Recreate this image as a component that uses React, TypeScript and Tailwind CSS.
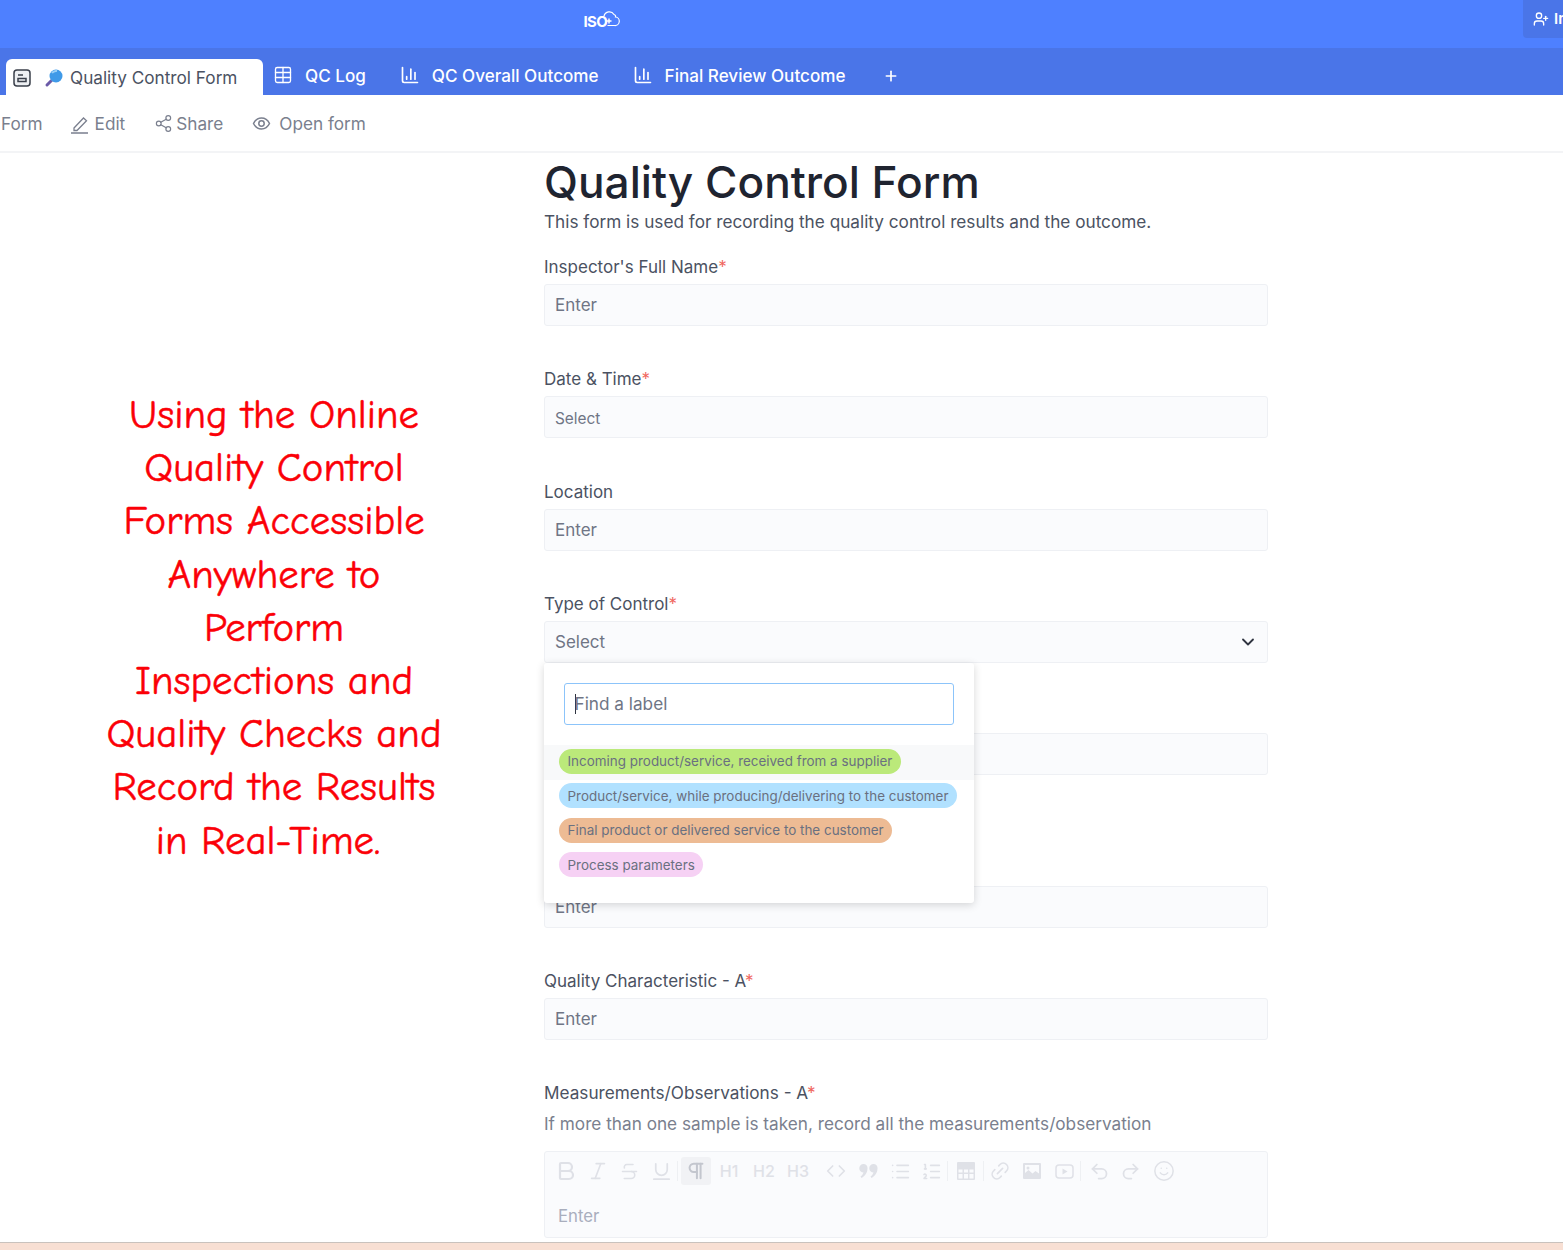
import React from 'react';
import {
  BarChart3, Bold, ChevronDown, Code, Italic, Link2, List, ListOrdered,
  Pilcrow, Plus, Redo2, Share2, Smile, Strikethrough, Table, Underline, Undo2, UserPlus,
} from 'lucide-react';

const headline = [
  'Using the Online',
  'Quality Control',
  'Forms Accessible',
  'Anywhere to',
  'Perform',
  'Inspections and',
  'Quality Checks and',
  'Record the Results',
  'in Real-Time.',
];

const Sep = () => <span className="h-[20px] w-px shrink-0 bg-[#eef0f3]" />;

const Cell = ({ w = 'w-[32px]', children }: { w?: string; children: React.ReactNode }) => (
  <span className={`flex h-[28px] shrink-0 items-center justify-center ${w}`}>{children}</span>
);

const Field = ({ label, required, placeholder, gap, small }: { label?: string; required?: boolean; placeholder: string; gap: string; small?: boolean }) => (
  <div className={gap}>
    {label ? (
      <div className="h-[18px] text-[17px] leading-[18px] text-[#4b5262]">
        {label}
        {required && <span className="text-[#f0685f]">*</span>}
      </div>
    ) : (
      <div className="h-[18px]" />
    )}
    <div className={`mt-[8px] flex h-[42px] items-center rounded-[3px] border border-[#eef0f4] bg-[#fafbfd] px-[10px] pt-[2px] text-[#6f7585] ${small ? 'text-[15.4px]' : 'text-[17px]'}`}>
      {placeholder}
    </div>
  </div>
);

const Pill = ({ text, color, hover }: { text: string; color: string; hover?: boolean }) => (
  <div className={`flex h-[34.5px] items-center px-[15px] ${hover ? 'bg-[#f8f9fa]' : ''}`}>
    <span className={`-mt-[2px] flex h-[25px] items-center whitespace-nowrap rounded-full px-[8.5px] text-[13.45px] text-[#6a7080] ${color}`}>{text}</span>
  </div>
);

const TabLabel = ({ icon, text }: { icon: React.ReactNode; text: string }) => (
  <div className="flex items-center gap-[12px] text-[17.1px] font-medium text-white">
    {icon}
    <span>{text}</span>
  </div>
);

export default function App() {
  return (
    <div className="relative h-[1250px] w-[1563px] overflow-hidden bg-white font-['Inter',sans-serif]">
      {/* top bar */}
      <div className="relative flex h-[48px] items-center justify-center bg-[#4e80ff] pb-[6px] pr-[360px]">
        <div className="relative flex h-[20px] w-[36px] items-end text-white">
          <span className="text-[15px] font-bold leading-[18px] tracking-[-0.6px]">ISO</span>
          <svg width="24" height="20" viewBox="0 0 24 20" fill="none" stroke="currentColor" strokeWidth="1.2" className="absolute right-0 top-[-1px]">
            <path d="M8 6a5.5 5.5 0 0 1 10-1.5 2 2 0 0 1 1.5 2.5 4.2 4.2 0 0 1 -1 8.500h-7" />
            <path d="M13 8.500v5M10.500 11h5" strokeWidth="1.500" />
          </svg>
        </div>
        <div className="absolute right-0 top-0 flex h-[38px] w-[40px] items-center gap-[5px] overflow-hidden rounded-bl-[4px] bg-[#4a75e8] pl-[10px] text-[15px] font-semibold text-white">
          <UserPlus className="h-[16px] w-[16px] shrink-0" />
          <span>Invite</span>
        </div>
      </div>

      {/* tabs */}
      <div className="flex h-[47px] items-end bg-[#4a75e8] pl-[6px]">
        <div className="flex h-[36px] w-[257px] items-center rounded-t-[6px] bg-white pl-[7px] pt-[1px]">
          <svg width="18" height="18" viewBox="0 0 18 18" fill="#eef0f3" stroke="#3a3f4a" strokeWidth="1.5">
            <rect x="1" y="1" width="16" height="16" rx="3" />
            <path d="M5 6h5M5 9.500h8v3H5z" fill="none" />
          </svg>
          <svg width="20" height="20" viewBox="0 0 20 20" className="ml-[13px]">
            <path d="M7.500 12.500l-4.500 4.500" stroke="#6b5aa8" strokeWidth="3" strokeLinecap="round" />
            <circle cx="12" cy="8" r="6.500" fill="#3f9ae8" />
            <path d="M8 5a5 5 0 0 1 5-2" stroke="#9ad0f7" strokeWidth="2" fill="none" />
          </svg>
          <span className="ml-[6px] text-[17.2px] text-[#4b5262]">Quality Control Form</span>
        </div>
        <div className="flex h-[47px] items-center pl-[10px] pt-[8px]">
          <TabLabel icon={<Table className="h-[20px] w-[20px]" strokeWidth={1.6} />} text="QC Log" />
          <div className="ml-[34px]">
            <TabLabel icon={<BarChart3 className="h-[20px] w-[20px]" />} text="QC Overall Outcome" />
          </div>
          <div className="ml-[34px]">
            <TabLabel icon={<BarChart3 className="h-[20px] w-[20px]" />} text="Final Review Outcome" />
          </div>
          <Plus className="ml-[38px] h-[16px] w-[16px] text-white" strokeWidth={2.5} />
        </div>
      </div>

      {/* form toolbar */}
      <div className="flex h-[58px] items-center border-b-2 border-[#f3f4f6] pl-[1px] pt-[2px] text-[17.2px] text-[#7a7f8e]">
        <span>Form</span>
        <span className="ml-[27px] flex items-center gap-[5px]">
          <svg width="20" height="20" viewBox="0 0 20 20" fill="none" stroke="currentColor" strokeWidth="1.300">
            <path d="M4 14l9.500-10 3 2.800L7 16.500H4zM1 19h17" />
          </svg>
          Edit
        </span>
        <span className="ml-[29px] flex items-center gap-[3px]">
          <Share2 className="h-[19px] w-[19px]" strokeWidth={1.5} />
          Share
        </span>
        <span className="ml-[29px] flex items-center gap-[8px]">
          <svg width="19" height="19" viewBox="0 0 19 19" fill="none" stroke="currentColor" strokeWidth="1.500">
            <path d="M1.500 9.500c2-4 5-5.500 8-5.500s6 1.500 8 5.500c-2 4-5 5.500-8 5.500s-6-1.500-8-5.500z" />
            <circle cx="9.500" cy="9.500" r="2.700" />
          </svg>
          Open form
        </span>
      </div>

      <div className="flex">
        {/* left headline */}
        <div className="w-[544px] shrink-0 pt-[235px]">
          <div className="w-[548px] text-center font-['Comic_Sans_MS','Comic_Neue',cursive] text-[40.800px] leading-[53.200px] text-[#fb0007] [-webkit-text-stroke:0.5px_#fb0007]">
            {headline.map((line, i) => (
              <div key={line} className={i === 8 ? 'pr-[12px]' : ''}>{line}</div>
            ))}
          </div>
        </div>

        {/* form */}
        <div className="relative w-[724px]">
          <h1 className="pt-[5px] text-[44.200px] font-medium leading-[48px] text-[#1f2430]">Quality Control Form</h1>
          <p className="mt-[4px] text-[17.200px] leading-[24px] text-[#4b5262]">This form is used for recording the quality control results and the outcome.</p>

          <Field label="Inspector's Full Name" required placeholder="Enter" gap="mt-[24px]" />
          <Field label="Date & Time" required placeholder="Select" gap="mt-[44.300px]" small />
          <Field label="Location" placeholder="Enter" gap="mt-[44.300px]" />

          <div className="mt-[44.300px]">
            <div className="h-[18px] text-[17px] leading-[18px] text-[#4b5262]">
              Type of Control<span className="text-[#f0685f]">*</span>
            </div>
            <div className="mt-[8px] flex h-[42px] items-center justify-between rounded-[3px] border border-[#eef0f4] bg-[#fafbfd] pl-[10px] pr-[9px] pt-[1px] text-[17px] text-[#6f7585]">
              Select
              <ChevronDown className="h-[20px] w-[20px] text-[#2f3440]" strokeWidth={2.2} />
            </div>
          </div>

          <Field placeholder="" gap="mt-[44.300px]" />
          <Field placeholder="Enter" gap="mt-[84.500px]" />
          <Field label="Quality Characteristic - A" required placeholder="Enter" gap="mt-[44.300px]" />

          <div className="mt-[44.300px]">
            <div className="h-[18px] text-[17.200px] leading-[18px] text-[#4b5262]">
              Measurements/Observations - A<span className="text-[#f0685f]">*</span>
            </div>
            <p className="mt-[12px] text-[17.200px] leading-[20px] text-[#7a7f8e]">If more than one sample is taken, record all the measurements/observation</p>
            <div className="mt-[17px] h-[87px] rounded-[3px] border border-[#eef0f4] bg-[#fafbfd] pl-[5px] pt-[5px] text-[#dfe1e7]">
              <div className="flex h-[28px] items-center">
                <Cell><Bold className="h-[24px] w-[24px]" strokeWidth={2.2} /></Cell>
                <Cell><Italic className="h-[22px] w-[22px]" strokeWidth={1.8} /></Cell>
                <Cell w="w-[31px]"><Strikethrough className="h-[21px] w-[21px]" strokeWidth={1.8} /></Cell>
                <Cell><Underline className="h-[23px] w-[23px]" strokeWidth={1.8} /></Cell>
                <Sep />
                <span className="ml-[3px] flex h-[28px] w-[30px] shrink-0 items-center justify-center rounded-[3px] bg-[#f1f2f5] text-[#c3c6ce]">
                  <Pilcrow className="h-[22px] w-[22px]" strokeWidth={2.2} />
                </span>
                <Cell w="w-[34px] ml-[1px]"><span className="text-[16px] font-medium">H1</span></Cell>
                <Cell w="w-[34px] ml-[1px]"><span className="text-[16px] font-medium">H2</span></Cell>
                <Cell w="w-[34px]"><span className="text-[16px] font-medium">H3</span></Cell>
                <span className="ml-[3px]"><Sep /></span>
                <Cell w="w-[35px]"><Code className="h-[20px] w-[20px]" strokeWidth={2} /></Cell>
                <Cell>
                  <svg width="20" height="14" viewBox="0 0 20 14" fill="currentColor">
                    <path d="M4.500 0a4 4 0 0 1 4 4.500c0 4-2.500 7.500-6 9.500l-1-1.500c1.500-1 2.500-2.500 3-4a4 4 0 0 1 0-8.500z" />
                    <path d="M14.500 0a4 4 0 0 1 4 4.500c0 4-2.500 7.500-6 9.500l-1-1.500c1.500-1 2.500-2.500 3-4a4 4 0 0 1 0-8.500z" />
                  </svg>
                </Cell>
                <Cell w="w-[31px]"><List className="h-[21px] w-[21px]" strokeWidth={1.8} /></Cell>
                <Cell w="w-[31px]"><ListOrdered className="h-[21px] w-[21px]" strokeWidth={1.8} /></Cell>
                <Sep />
                <Cell w="w-[35px]">
                  <svg width="18" height="18" viewBox="0 0 18 18" fill="currentColor">
                    <path d="M1 0h16a1 1 0 0 1 1 1v16a1 1 0 0 1-1 1H1a1 1 0 0 1-1-1V1a1 1 0 0 1 1-1zM1.500 7.500v3h4v-3zm5.500 0v3h4v-3zm5.500 0v3h4v-3zm-11 4.500v4.500h4V12zm5.500 0v4.500h4V12zm5.500 0v4.500h4V12z" fillRule="evenodd" />
                  </svg>
                </Cell>
                <Sep />
                <Cell w="w-[32px]"><Link2 className="h-[22px] w-[22px] -rotate-45" strokeWidth={1.8} /></Cell>
                <Cell>
                  <svg width="18" height="16" viewBox="0 0 18 16" fill="currentColor">
                    <path d="M1 0h16a1 1 0 0 1 1 1v14a1 1 0 0 1-1 1H1a1 1 0 0 1-1-1V1a1 1 0 0 1 1-1zM2 2v8l3.500-3 4 3.500 3-2.500L16 10.500V2zM5 3.500a1.500 1.500 0 1 1 0 3 1.500 1.500 0 0 1 0-3z" fillRule="evenodd" />
                  </svg>
                </Cell>
                <Cell>
                  <svg width="19" height="15" viewBox="0 0 19 15" fill="none" stroke="currentColor" strokeWidth="1.500">
                    <rect x="1" y="1" width="17" height="13" rx="3" />
                    <path d="M7.500 4.500l5 3-5 3z" fill="currentColor" stroke="none" />
                  </svg>
                </Cell>
                <Sep />
                <span className="ml-[2px]"><Cell><Undo2 className="h-[21px] w-[21px]" strokeWidth={2} /></Cell></span>
                <Cell w="w-[30px]"><Redo2 className="h-[21px] w-[21px]" strokeWidth={2} /></Cell>
                <span className="ml-[2px]"><Sep /></span>
                <Cell w="w-[34px]"><Smile className="h-[22px] w-[22px]" strokeWidth={1.6} /></Cell>
              </div>
              <div className="mt-[19px] text-[16.800px] leading-[24px] text-[#a9aebd]">
                <span className="pl-[8px]">Enter</span>
              </div>
            </div>
          </div>

          {/* label picker dropdown */}
          <div className="absolute left-0 top-[510px] h-[240px] w-[430px] rounded-[3px] bg-white shadow-[0_2px_8px_rgba(0,0,0,0.16)]">
            <div className="pl-[19.500px] pt-[20px]">
              <div className="flex h-[42px] w-[390px] items-center rounded-[3px] border border-[#8cc4fa] pl-[10px] text-[17.200px] text-[#6f7585]">
                <span className="-mr-[1px] h-[20px] w-px bg-[#2f3440]" />
                Find a label
              </div>
            </div>
            <div className="mt-[20px]">
              <Pill text="Incoming product/service, received from a supplier" color="bg-[#bbe97a]" hover />
              <Pill text="Product/service, while producing/delivering to the customer" color="bg-[#b1e1ff]" />
              <Pill text="Final product or delivered service to the customer" color="bg-[#edbb94]" />
              <Pill text="Process parameters" color="bg-[#f6d1f4]" />
            </div>
          </div>
        </div>
      </div>

      {/* screenshot edge */}
      <div className="absolute bottom-0 left-0 h-[8px] w-full border-t border-[#c9c2bd] bg-[#f8dfd3]" />
    </div>
  );
}
